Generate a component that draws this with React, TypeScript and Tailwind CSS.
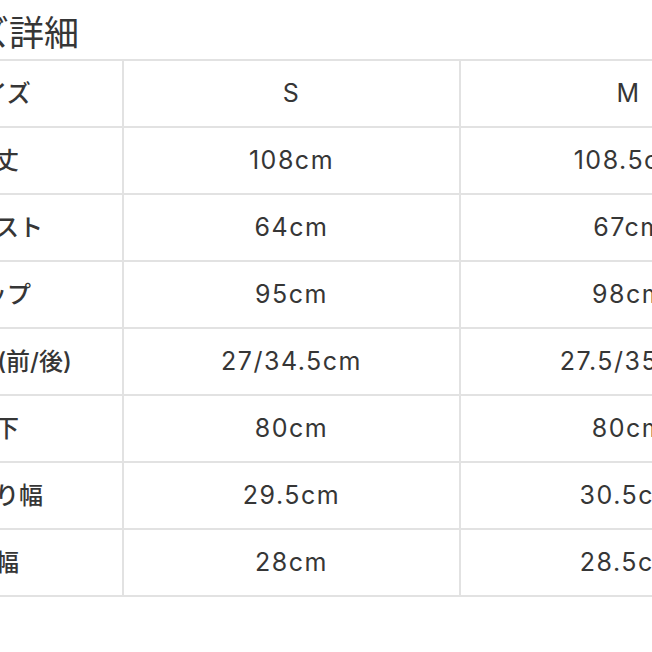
const rows = [
  { label: "サイズ", s: "S", m: "M" },
  { label: "総丈", s: "108cm", m: "108.5cm" },
  { label: "ウエスト", s: "64cm", m: "67cm" },
  { label: "ヒップ", s: "95cm", m: "98cm" },
  { label: "股上(前/後)", s: "27/34.5cm", m: "27.5/35cm", shift: true },
  { label: "股下", s: "80cm", m: "80cm" },
  { label: "わたり幅", s: "29.5cm", m: "30.5cm" },
  { label: "裾幅", s: "28cm", m: "28.5cm" },
]

export default function App() {
  return (
    <div
      className="w-[652px] h-[652px] overflow-hidden bg-white text-[#363636]"
      style={{ fontFamily: 'Inter, "Noto Sans CJK JP", sans-serif' }}
    >
      <div className="ml-[-95px] pt-[12px] h-[59px] text-[35px] leading-[42px] whitespace-nowrap">
        サイズ詳細
      </div>
      <table className="ml-[-134px] w-[930px] table-fixed border-collapse text-[25px] tracking-[1.5px]">
        <colgroup>
          <col className="w-[256px]" />
          <col className="w-[337px]" />
          <col className="w-[337px]" />
        </colgroup>
        <tbody>
          {rows.map((row, i) => (
            <tr key={i} className="h-[67px]">
              <td
                className={
                  row.shift
                    ? "border-2 border-[#e2e2e2] text-center whitespace-nowrap text-[24px] tracking-normal font-medium pl-[31px]"
                    : "border-2 border-[#e2e2e2] text-center whitespace-nowrap text-[24px] tracking-normal font-medium"
                }
              >
                {row.label}
              </td>
              <td className="border-2 border-[#e2e2e2] text-center whitespace-nowrap">{row.s}</td>
              <td className="border-2 border-[#e2e2e2] text-center whitespace-nowrap">{row.m}</td>
            </tr>
          ))}
        </tbody>
      </table>
    </div>
  )
}
